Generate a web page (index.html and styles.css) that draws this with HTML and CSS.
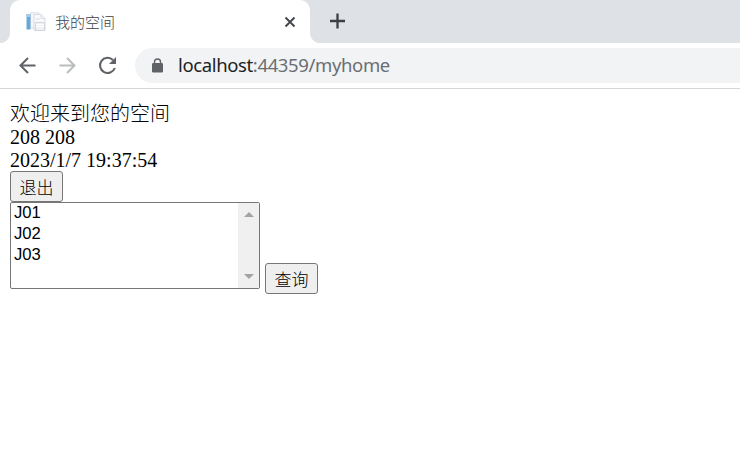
FILE: index.html
```
<!DOCTYPE html>
<html lang="zh-CN">
<head>
<meta charset="utf-8">
<title>我的空间</title>
<link rel="stylesheet" href="styles.css">
</head>
<body>
<header class="tabs">
  <div class="tab">
    <svg class="favicon" width="20" height="20" viewBox="0 0 20 20">
      <path d="M4.5.8h8l2.5 2.5v13H4.5z" fill="#f3f5f8" stroke="#dcdfe5"/>
      <path d="M8 2.5h7l4 4v12H8z" fill="#f8f9fb" stroke="#d8dce2"/>
      <path d="M15 2.5v4h4M10 7h4" fill="none" stroke="#d8dce2"/>
      <path d="M.5 2h4v15.500h-4z" fill="#67a9d6"/>
      <path d="M.5 2h4v3h-4z" fill="#a5cbe5"/>
      <path d="M9.500 10.500h9v8h-9z" fill="#eff1f4" stroke="#d3d6db"/>
      <path d="M10 12.500h8M10 14.500h8" stroke="#fff"/>
    </svg>
    <span class="title">我的空间</span>
    <svg class="close" width="12" height="12" viewBox="0 0 12 12"><path d="M1.500 1.500l9 9m0-9l-9 9" fill="none" stroke="#45494d" stroke-width="2"/></svg>
  </div>
  <svg class="new-tab" width="16" height="16" viewBox="0 0 16 16"><path d="M7.500.5v15M0 8h15" fill="none" stroke="#3c4043" stroke-width="2.300"/></svg>
</header>
<nav class="toolbar">
  <svg class="nav-icon" width="20" height="20" viewBox="0 0 20 20"><path d="M18.500 9.500H3.500m7.500-7.500L3.500 9.500l7.500 7.500" fill="none" stroke="#5f6368" stroke-width="2"/></svg>
  <svg class="nav-icon" width="20" height="20" viewBox="0 0 20 20"><path d="M2.500 9.500h15M10 2l7.500 7.500L10 17" fill="none" stroke="#babcbe" stroke-width="2"/></svg>
  <svg class="nav-icon" width="20" height="20" viewBox="0 0 20 20"><path d="M16 4A7.600 7.600 0 1 0 17.800 12" fill="none" stroke="#5f6368" stroke-width="2.100"/><path d="M19 1v7h-7z" fill="#5f6368"/></svg>
  <div class="address">
    <svg width="11" height="15" viewBox="0 0 11 15"><path d="M2.500 6V4a3 3 0 0 1 6 0v2" fill="none" stroke="#5f6368" stroke-width="1.400"/><rect y="5" width="11" height="9.500" rx="1.200" fill="#5f6368"/></svg>
    <span class="url"><span class="host">localhost</span>:44359/myhome</span>
  </div>
</nav>
<main class="page">
  <div class="welcome">欢迎来到您的空间</div>
  <div class="line">208 208</div>
  <div class="line">2023/1/7 19:37:54</div>
  <button class="btn">退出</button>
  <div class="query">
    <div class="listbox">
      <div class="options"><div>J01</div><div>J02</div><div>J03</div></div>
      <div class="scrollbar">
        <svg width="10" height="5" viewBox="0 0 10 5"><path d="M0 5L5 0l5 5z" fill="#a3a3a3"/></svg>
        <svg width="10" height="5" viewBox="0 0 10 5"><path d="M0 0h10L5 5z" fill="#a3a3a3"/></svg>
      </div>
    </div>
    <button class="btn search">查询</button>
  </div>
</main>
</body>
</html>
```
FILE: styles.css
```
* { box-sizing: border-box; }
body { margin: 0; height: 468px; overflow: hidden; background: #fff; }
svg { display: block; flex: none; }
.tabs { display: flex; height: 43px; padding-left: 10px; background: #dee1e6; }
.tab {
  position: relative;
  display: flex;
  align-items: center;
  width: 300px;
  padding: 0 14px 0 16px;
  border-radius: 10px 10px 0 0;
  background: #fff;
}
.tab::before, .tab::after {
  content: "";
  position: absolute;
  bottom: 0;
  width: 10px;
  height: 10px;
}
.tab::before { left: -10px; background: radial-gradient(circle at 0 0, #dee1e6 9.500px, #fff 10.500px); }
.tab::after { right: -10px; background: radial-gradient(circle at 100% 0, #dee1e6 9.500px, #fff 10.500px); }
.title {
  margin-left: 9px;
  font: 300 15px/22px "Noto Sans CJK SC", sans-serif;
  color: #3c4043;
}
.close { margin-left: auto; }
.new-tab { margin: 13px 0 0 20px; }
.toolbar {
  display: flex;
  align-items: center;
  height: 46px;
  padding-left: 17px;
  border-bottom: 1px solid #d5d7da;
}
.nav-icon { margin-right: 20px; }
.address {
  display: flex;
  align-items: center;
  flex: 1;
  height: 35px;
  margin-left: -2px;
  padding-left: 17px;
  border-radius: 18px 0 0 18px;
  background: #f1f3f4;
}
.url {
  margin: -2px 0 0 15px;
  font: 18.500px/24px "Noto Sans", sans-serif;
  letter-spacing: -0.370px;
  white-space: nowrap;
  color: #6a6e73;
}
.host { color: #202124; }
.page { padding: 12px 10px 0; color: #000; }
.welcome { height: 24px; font: 300 20px/24px "Noto Sans CJK SC", sans-serif; }
.line { height: 23px; font: 20px/24px "Liberation Serif", serif; }
.btn {
  display: block;
  width: 53px;
  height: 31px;
  padding: 0;
  border: 1px solid #767676;
  border-radius: 3px;
  background: #efefef;
  color: #000;
  font: 300 17px/27px "Noto Sans CJK SC", sans-serif;
}
.query { display: flex; gap: 5px; }
.listbox {
  display: flex;
  justify-content: space-between;
  width: 250px;
  height: 87px;
  border: 1px solid #767676;
  border-radius: 2px;
  background: #fff;
}
.options { padding-left: 3px; font: 16.670px/21px "Liberation Sans", sans-serif; margin-top: -1px; }
.scrollbar {
  display: flex;
  flex-direction: column;
  justify-content: space-between;
  align-items: center;
  width: 21px;
  padding: 9px 0 9px;
  background: #f0f0f0;
}
.search { margin-top: 61px; }
```
